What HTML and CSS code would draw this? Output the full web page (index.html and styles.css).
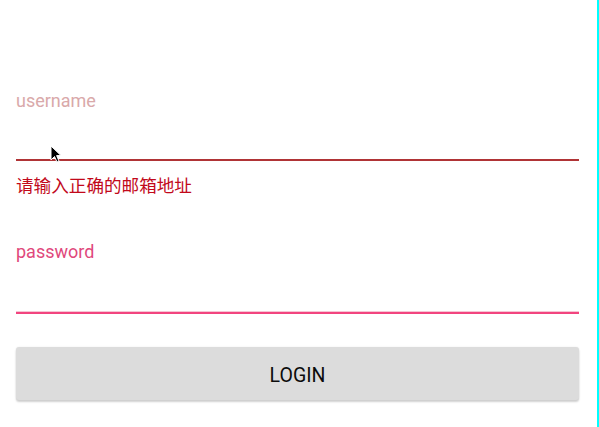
FILE: index.html
```html
<!DOCTYPE html>
<html>
<head>
  <title>Login</title>
  <link rel="stylesheet" href="styles.css">
</head>
<body>
  <div class="page">
    <form class="login-form">
      <div class="field field-error">
        <label class="field-label">username</label>
        <input type="text" class="field-input">
      </div>
      <p class="error-text">请输入正确的邮箱地址</p>
      <div class="field field-focus">
        <label class="field-label">password</label>
        <input type="password" class="field-input">
      </div>
      <button type="button" class="login-button">LOGIN</button>
    </form>
    <svg class="cursor" width="12" height="19" viewBox="0 0 12 19">
      <path d="M1 1 L1 15 L4.5 11.5 L7 17 L9 16 L6.6 10.6 L11 10.6 Z" fill="#000" stroke="#fff" stroke-width="1"/>
    </svg>
  </div>
</body>
</html>
```

FILE: styles.css
```css
body {
  margin: 0;
  font-family: Roboto, "Noto Sans CJK SC", sans-serif;
  background-color: #fff;
}

.page {
  position: relative;
  width: 599px;
  height: 100vh;
  box-sizing: border-box;
  border-right: 2px solid #00ffff;
  padding: 0 18px 0 16px;
}

.login-form {
  display: flex;
  flex-direction: column;
  padding-top: 89px;
}

.field {
  display: flex;
  flex-direction: column;
}

.field-label {
  font-size: 18px;
  line-height: 24px;
}

.field-input {
  height: 46px;
  border: none;
  outline: none;
  padding: 0;
  background: transparent;
  font-size: 18px;
}

.field-error .field-label {
  color: #d9a9aa;
}

.field-error .field-input {
  border-bottom: 2px solid #b03436;
}

.error-text {
  margin: 13px 0 0;
  font-size: 17.6px;
  line-height: 24px;
  color: #c2091b;
}

.field-focus {
  margin-top: 42px;
}

.field-focus .field-label {
  color: #e0487c;
}

.field-focus .field-input {
  height: 48px;
  border-bottom: 2px solid #f2457f;
  box-shadow: 0 -1px 0 #f5c6d4 inset;
}

.login-button {
  margin-top: 33px;
  height: 53px;
  padding-top: 5px;
  border: none;
  border-radius: 3px;
  background-color: #dcdcdc;
  color: #0c0c0c;
  font-family: Roboto, sans-serif;
  font-size: 19.5px;
  box-shadow: 0 2px 2px rgba(0, 0, 0, 0.18), 0 0 2px rgba(0, 0, 0, 0.08);
  cursor: pointer;
}

.cursor {
  position: absolute;
  left: 50px;
  top: 145px;
}
```
